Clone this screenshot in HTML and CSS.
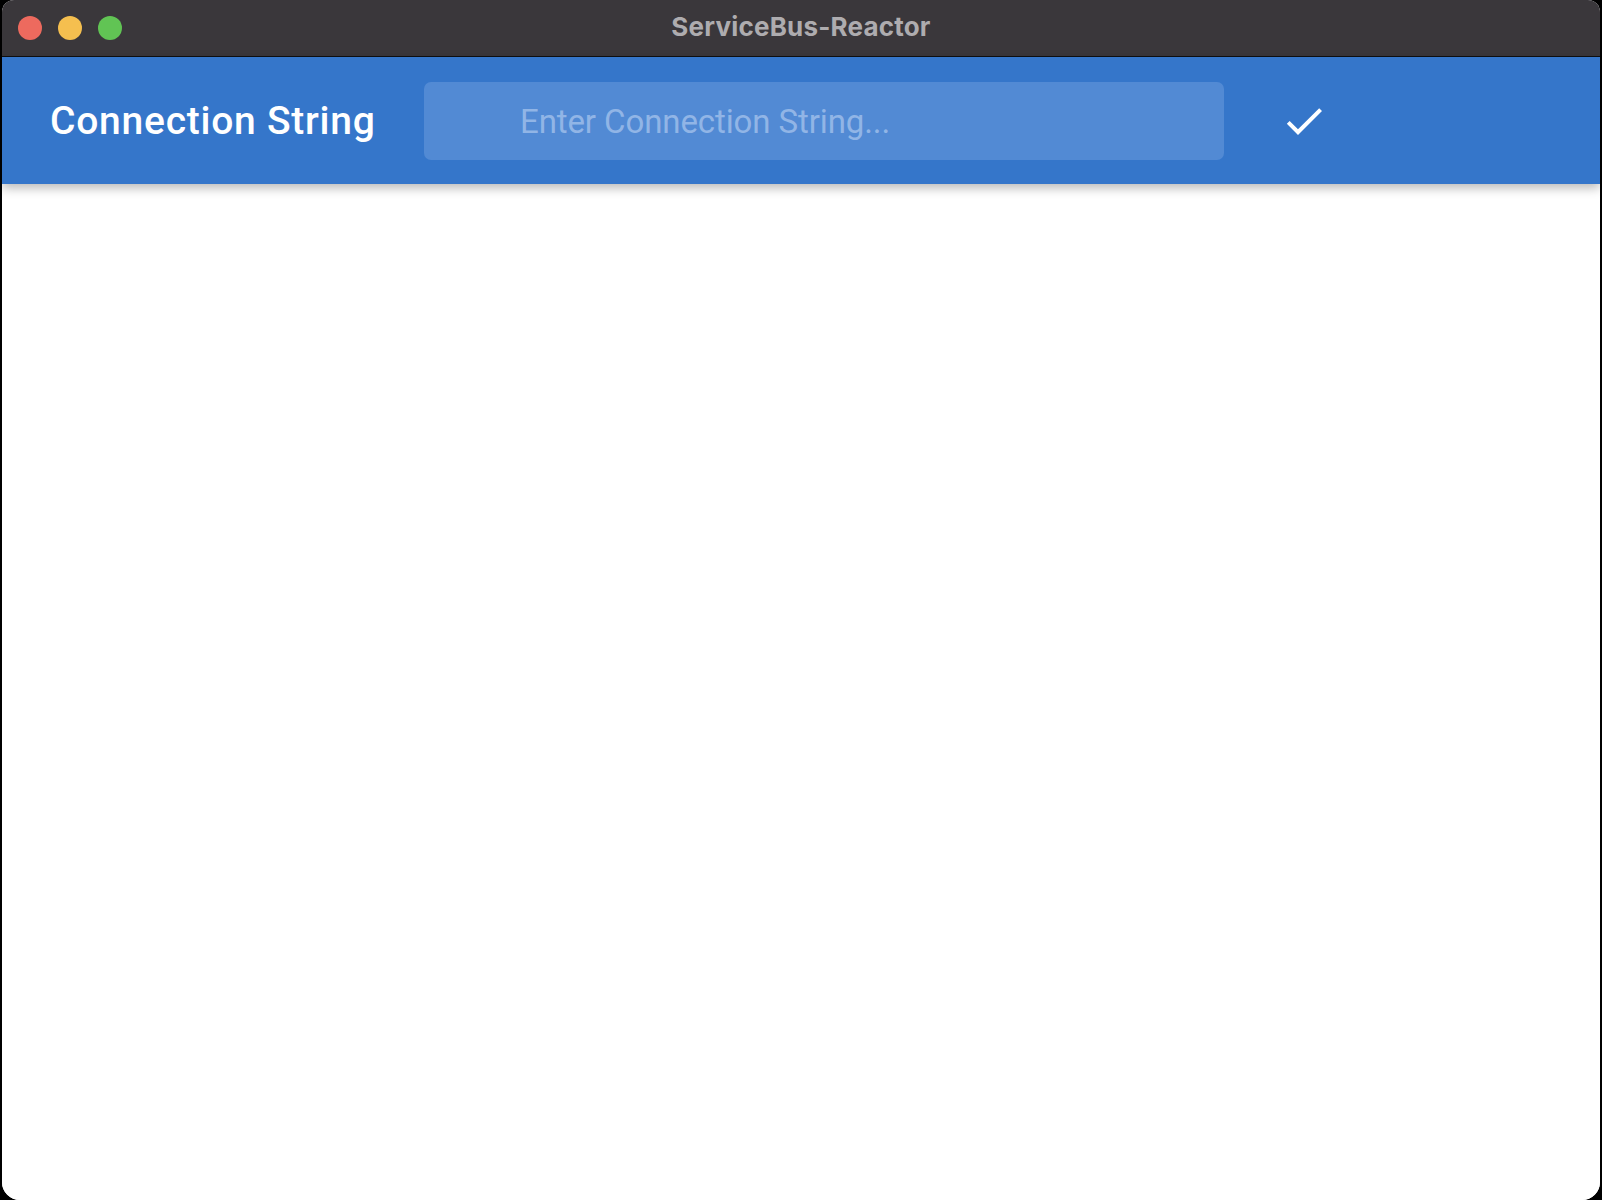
FILE: index.html
```html
<!DOCTYPE html>
<html lang="en">
<head>
<meta charset="utf-8">
<title>ServiceBus-Reactor</title>
<link rel="stylesheet" href="styles.css">
</head>
<body>
<div class="window">
  <div class="titlebar">
    <div class="lights">
      <span class="light red"></span>
      <span class="light yellow"></span>
      <span class="light green"></span>
    </div>
    <div class="title">ServiceBus-Reactor</div>
  </div>
  <header class="appbar">
    <h1 class="appbar-title">Connection String</h1>
    <div class="conn-input">Enter Connection String...</div>
    <button class="check-btn" aria-label="Confirm">
      <svg viewBox="0 0 24 24" width="48" height="48"><path fill="#ffffff" d="M9 16.17L4.83 12l-1.42 1.41L9 19 21 7l-1.41-1.41z"/></svg>
    </button>
  </header>
  <main class="content"></main>
</div>
</body>
</html>
```

FILE: styles.css
```css
html, body {
  margin: 0;
  padding: 0;
  height: 100%;
  background: #000;
}
body {
  display: flex;
  justify-content: center;
  overflow: hidden;
}
.window {
  width: 1598px;
  height: 1200px;
  background: #ffffff;
  border-radius: 12px 12px 18px 18px;
  overflow: hidden;
  display: flex;
  flex-direction: column;
  box-sizing: border-box;
}
.titlebar {
  position: relative;
  height: 56px;
  flex: none;
  background: #3a373b;
  border-bottom: 1px solid #0f0f10;
  border-top: 1px solid #6a686b;
  box-sizing: content-box;
  margin-top: -1px;
  border-radius: 12px 12px 0 0;
  display: flex;
  align-items: center;
  justify-content: center;
}
.lights {
  position: absolute;
  left: 16px;
  top: 16px;
  display: flex;
  gap: 16px;
}
.light {
  width: 24px;
  height: 24px;
  border-radius: 50%;
  display: block;
}
.red { background: #ed6a5e; }
.yellow { background: #f5bf4f; }
.green { background: #61c454; }
.title {
  font-family: Inter, "Liberation Sans", sans-serif;
  font-weight: 700;
  font-size: 26px;
  color: #aeacaf;
  letter-spacing: 0.2px;
  margin-top: -3px;
}
.appbar {
  flex: none;
  height: 127px;
  background: #3576ca;
  display: flex;
  align-items: center;
  padding-left: 48px;
  box-shadow: 0 4px 10px rgba(0, 0, 0, 0.28);
  position: relative;
  z-index: 1;
}
.appbar-title {
  margin: 0;
  width: 374px;
  flex: none;
  font-family: Roboto, "Noto Sans", sans-serif;
  font-weight: 500;
  font-size: 39px;
  letter-spacing: 0.75px;
  color: #ffffff;
  white-space: nowrap;
}
.conn-input {
  flex: none;
  width: 800px;
  height: 78px;
  margin-top: 1px;
  box-sizing: border-box;
  padding-left: 96px;
  border-radius: 7px;
  background: #528ad4;
  display: flex;
  align-items: center;
  font-family: Roboto, "Noto Sans", sans-serif;
  font-size: 33px;
  letter-spacing: -0.1px;
  color: #91b5e6;
}
.check-btn {
  flex: none;
  margin-left: 56px;
  width: 48px;
  height: 48px;
  padding: 0;
  border: 0;
  background: transparent;
  display: flex;
}
.content {
  flex: 1;
  background: #ffffff;
}
```
